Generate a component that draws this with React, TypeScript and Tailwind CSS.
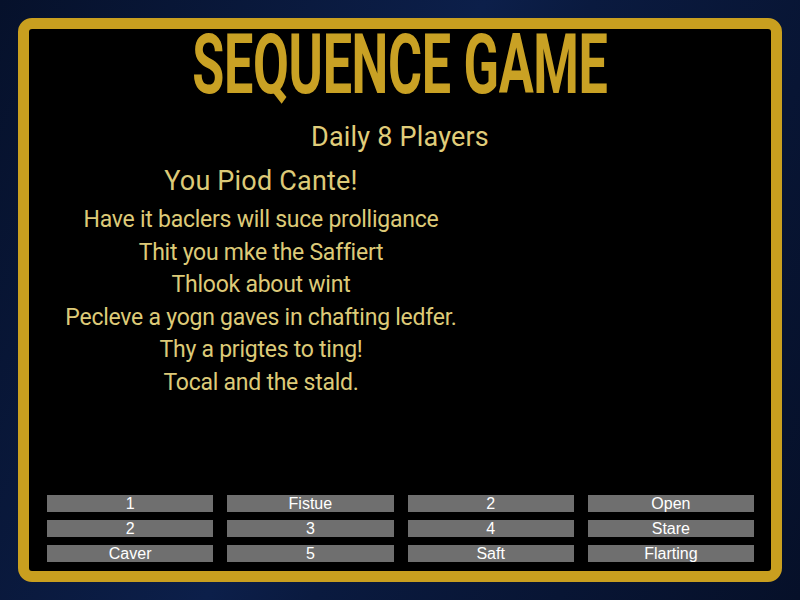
const cells = ["1", "Fistue", "2", "Open", "2", "3", "4", "Stare", "Caver", "5", "Saft", "Flarting"];

const lines = [
  "Have it baclers will suce prolligance",
  "Thit you mke the Saffiert",
  "Thlook about wint",
  "Pecleve a yogn gaves in chafting ledfer.",
  "Thy a prigtes to ting!",
  "Tocal and the stald.",
];

export default function App() {
  return (
    <div className="w-[800px] h-[600px] p-[18px] bg-[#081636] bg-[linear-gradient(115deg,#06112b_0%,#0c1f4a_45%,#0a1a3f_55%,#061029_100%)]">
      <div className="h-full flex flex-col rounded-[14px] border-[11px] border-[#c99f1f] bg-black">
        {/* Title */}
        <div className="flex justify-center h-[68px]">
          <h1 className="font-['Roboto',sans-serif] font-bold text-[84px] leading-[72px] text-[#c9a124] tracking-[-0.5px] scale-x-[0.62] whitespace-nowrap">
            SEQUENCE GAME
          </h1>
        </div>

        <p className="mt-[24px] text-center font-['Roboto',sans-serif] text-[27px] leading-[32px] tracking-[0.2px] text-[#e0cd7a]">
          Daily 8 Players
        </p>

        <div className="w-[464px] flex flex-col items-center font-['Roboto',sans-serif] text-[#ddca78]">
          <p className="mt-[12px] text-[27px] leading-[32px] tracking-[0.2px]">You Piod Cante!</p>
          <div className="mt-[7px] flex flex-col items-center text-[23px] leading-[32.6px] tracking-[-0.25px]">
            {lines.map((l) => (
              <p key={l}>{l}</p>
            ))}
          </div>
        </div>

        {/* Button grid */}
        <div className="mt-auto grid grid-cols-4 gap-x-[14px] gap-y-[8px] pl-[18px] pr-[17px] pb-[9px]">
          {cells.map((c, i) => (
            <div
              key={i}
              className="h-[17px] bg-[#6f6f6f] flex items-center justify-center font-['Liberation_Sans',sans-serif] text-white text-[16px] leading-none"
            >
              {c}
            </div>
          ))}
        </div>
      </div>
    </div>
  );
}
